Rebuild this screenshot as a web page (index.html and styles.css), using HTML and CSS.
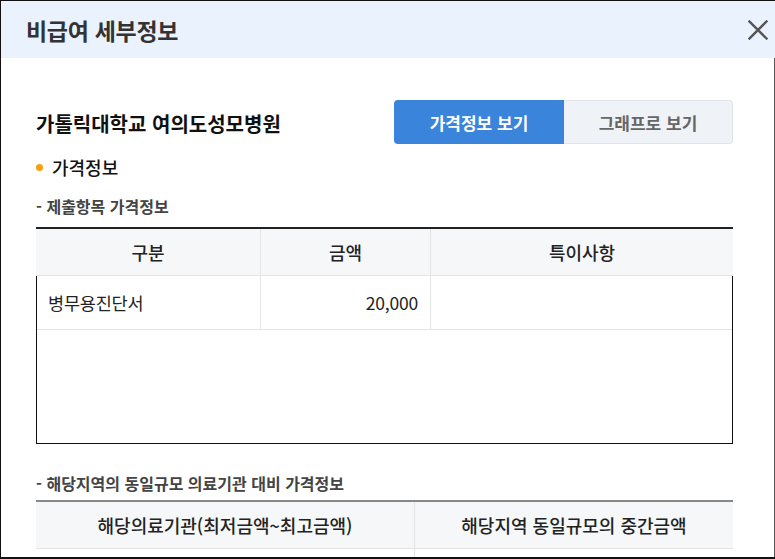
FILE: index.html
```html
<!DOCTYPE html>
<html lang="ko">
<head>
<meta charset="utf-8">
<title>비급여 세부정보</title>
<link rel="stylesheet" href="styles.css">
</head>
<body>
<div class="modal">
  <div class="modal-head">
    <h1 class="modal-title">비급여 세부정보</h1>
    <button class="close" type="button" aria-label="닫기">
      <svg width="20" height="20" viewBox="0 0 20 20"><path d="M1.5 1.5 L18.5 18.5 M18.5 1.5 L1.5 18.5" stroke="#555" stroke-width="2.4" fill="none" stroke-linecap="square"/></svg>
    </button>
  </div>
  <div class="modal-body">
    <div class="hosp-row">
      <h2 class="hosp-name">가톨릭대학교 여의도성모병원</h2>
      <div class="toggle">
        <button class="tg tg-on" type="button">가격정보 보기</button>
        <button class="tg tg-off" type="button">그래프로 보기</button>
      </div>
    </div>
    <h3 class="bullet">가격정보</h3>
    <h4 class="sub sub-1">- 제출항목 가격정보</h4>
    <div class="tbl1">
      <div class="thead cols1">
        <div class="th">구분</div>
        <div class="th">금액</div>
        <div class="th">특이사항</div>
      </div>
      <div class="tbox">
        <div class="trow cols1b">
          <div class="td">병무용진단서</div>
          <div class="td num">20,000</div>
          <div class="td"></div>
        </div>
      </div>
    </div>
    <h4 class="sub sub-2">- 해당지역의 동일규모 의료기관 대비 가격정보</h4>
    <div class="tbl2">
      <div class="thead cols2">
        <div class="th">해당의료기관(최저금액~최고금액)</div>
        <div class="th">해당지역 동일규모의 중간금액</div>
      </div>
      <div class="trow2 cols2">
        <div class="td"></div>
        <div class="td"></div>
      </div>
    </div>
  </div>
</div>
</body>
</html>
```
FILE: styles.css
```css
* { box-sizing: border-box; }
html, body { margin: 0; padding: 0; }
body {
  width: 775px;
  height: 559px;
  overflow: hidden;
  background: #fff;
  font-family: "Noto Sans CJK KR", "Noto Sans", sans-serif;
  color: #222;
}
.modal {
  width: 775px;
  height: 559px;
  border-left: 1px solid #111;
  border-top: 1px solid #111;
  border-bottom: 2px solid #111;
  display: flex;
  flex-direction: column;
  overflow: hidden;
}
.modal-head {
  height: 57px;
  flex: none;
  background: #eaf2fd;
  display: flex;
  align-items: center;
  justify-content: space-between;
  padding: 0 7px 0 25px;
}
.modal-title {
  margin: 0;
  font-size: 23px;
  font-weight: 700;
  color: #333;
  letter-spacing: -0.3px;
  line-height: 30px;
}
.close {
  border: 0;
  background: transparent;
  padding: 0;
  width: 20px;
  height: 20px;
  display: flex;
}
.modal-body {
  flex: 1;
  width: 774px;
  border-right: 1px solid #555;
  padding: 42px 41px 0 35px;
}
.hosp-row {
  display: flex;
  align-items: center;
  justify-content: space-between;
  height: 44px;
}
.hosp-name {
  margin: 0;
  font-size: 20px;
  font-weight: 700;
  color: #111;
  letter-spacing: 0;
  line-height: 28px;
  padding-top: 4px;
}
.toggle {
  display: flex;
  height: 44px;
}
.tg {
  font-family: inherit;
  font-size: 17px;
  font-weight: 700;
  letter-spacing: 0;
  height: 44px;
  border: 0;
  padding: 0;
}
.tg-on {
  width: 170px;
  background: #3a84dc;
  color: #fff;
  border-radius: 4px 0 0 4px;
}
.tg-off {
  width: 169px;
  background: #eff3f7;
  color: #666;
  border: 1px solid #dfe4ea;
  border-left: 0;
  border-radius: 0 4px 4px 0;
}
.bullet {
  margin: 11px 0 0 0;
  font-size: 18px;
  font-weight: 500;
  color: #111;
  line-height: 24px;
  display: flex;
  align-items: center;
}
.bullet::before {
  content: "";
  width: 7px;
  height: 7px;
  border-radius: 50%;
  background: #f5a00f;
  margin: 0 9px 0 0;
}
.sub {
  margin: 0;
  font-size: 16px;
  font-weight: 700;
  color: #444;
  line-height: 20px;
  letter-spacing: 0;
}
.sub-1 { margin-top: 17px; }
.sub-2 { margin-top: 29px; }
.tbl1 {
  margin-top: 11px;
  width: 697px;
  border-top: 2px solid #222;
}
.thead {
  height: 47px;
  background: #f6f7f9;
  border-bottom: 1px solid #e4e4e4;
}
.cols1 {
  display: grid;
  grid-template-columns: 224px 170px 1fr;
}
.cols1b {
  display: grid;
  grid-template-columns: 223px 170px 1fr;
}
.cols2 {
  display: grid;
  grid-template-columns: 378px 1fr;
}
.th {
  display: flex;
  align-items: center;
  justify-content: center;
  font-size: 18px;
  font-weight: 500;
  color: #222;
  letter-spacing: 0;
}
.th + .th, .td + .td { border-left: 1px solid #e4e4e4; }
.tbox {
  height: 168px;
  border: 1px solid #111;
  border-top: 0;
}
.trow {
  height: 54px;
  border-bottom: 1px solid #e4e4e4;
}
.td {
  display: flex;
  align-items: center;
  font-size: 17.5px;
  color: #222;
  padding: 0 12px 0 11px;
  letter-spacing: -0.2px;
}
.td.num { justify-content: flex-end; }
.tbl2 {
  margin-top: 7px;
  width: 697px;
  border-top: 2px solid #888;
}
.trow2 { height: 60px; }
```
